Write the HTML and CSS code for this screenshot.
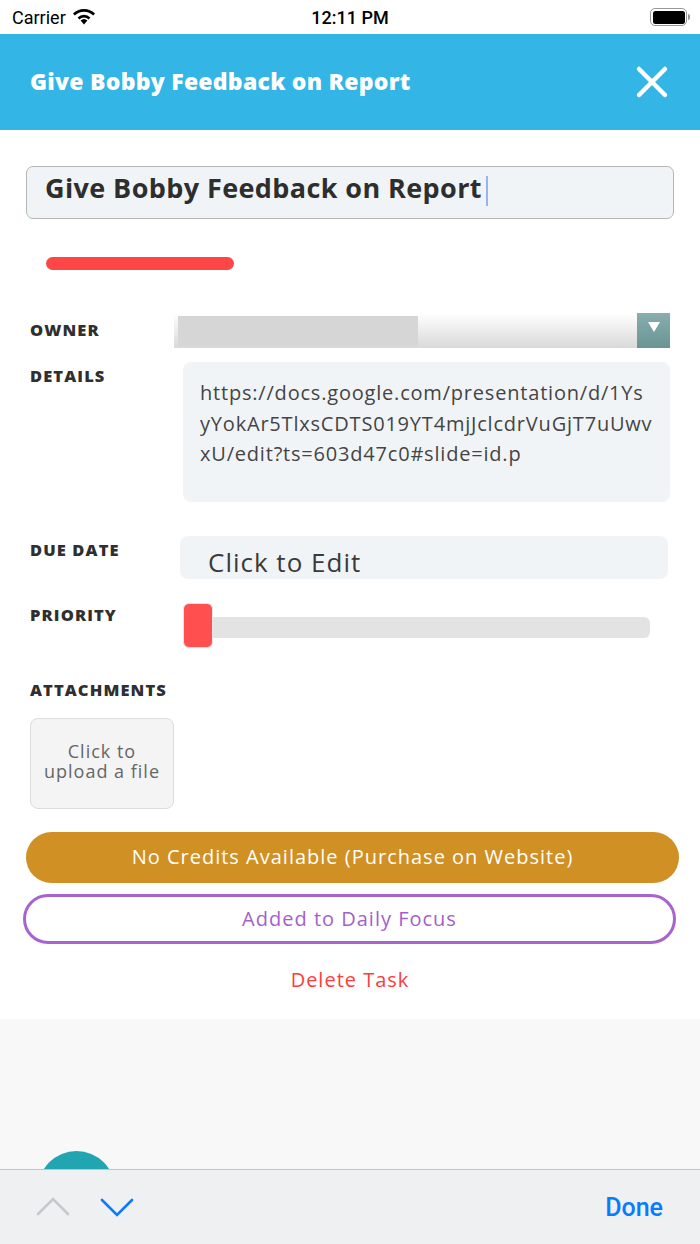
FILE: index.html
```html
<!DOCTYPE html>
<html>
<head>
<meta charset="utf-8">
<link rel="stylesheet" href="styles.css">
</head>
<body>
<div class="status">
  <div class="st-left">
    <span class="carrier">Carrier</span>
    <svg class="wifi" width="24" height="18" viewBox="0 0 24 18">
      <path d="M12 17.5 L8.6 13.6 A5 5 0 0 1 15.4 13.6 Z" fill="#000"/>
      <path d="M5.6 10.4 A9.3 9.3 0 0 1 18.4 10.4 L16.6 12.4 A6.6 6.6 0 0 0 7.4 12.4 Z" fill="#000"/>
      <path d="M1 6.6 A15.5 15.5 0 0 1 23 6.6 L21.2 8.6 A12.8 12.8 0 0 0 2.8 8.6 Z" fill="#000"/>
    </svg>
  </div>
  <div class="time">12:11 PM</div>
  <div class="battery"><div class="batt-body"><div class="batt-fill"></div></div><div class="batt-nub"></div></div>
</div>

<header class="header">
  <h1 class="header-title">Give Bobby Feedback on Report</h1>
  <svg class="close" width="34" height="34" viewBox="0 0 34 34">
    <path d="M4 4 L30 30 M30 4 L4 30" stroke="#fff" stroke-width="4.5" stroke-linecap="round"/>
  </svg>
</header>

<main class="content">
  <div class="title-input"><span class="title-text">Give Bobby Feedback on Report</span><span class="caret"></span></div>
  <div class="red-bar"></div>

  <div class="row row-owner">
    <div class="label">OWNER</div>
    <div class="select"><div class="select-value"></div><div class="select-btn"><span class="tri"></span></div></div>
  </div>

  <div class="row row-details">
    <div class="label">DETAILS</div>
    <div class="textarea">https://docs.google.com/presentation/d/1Ys<br>yYokAr5TlxsCDTS019YT4mjJclcdrVuGjT7uUwv<br>xU/edit?ts=603d47c0#slide=id.p</div>
  </div>

  <div class="row row-due">
    <div class="label">DUE DATE</div>
    <div class="due-box">Click to Edit</div>
  </div>

  <div class="row row-priority">
    <div class="label">PRIORITY</div>
    <div class="slider"><div class="track"></div><div class="thumb"></div></div>
  </div>

  <div class="label label-attach">ATTACHMENTS</div>
  <div class="upload">Click to<br>upload a file</div>

  <div class="btn btn-credits">No Credits Available (Purchase on Website)</div>
  <div class="btn btn-focus">Added to Daily Focus</div>
  <div class="delete">Delete Task</div>
</main>

<div class="filler"><div class="fab"></div></div>

<footer class="toolbar">
  <svg class="chev" width="34" height="22" viewBox="0 0 34 22">
    <path d="M2 19 L17 4 L32 19" stroke="#c7c7cc" stroke-width="2.6" fill="none" stroke-linecap="round"/>
  </svg>
  <svg class="chev chev-down" width="34" height="22" viewBox="0 0 34 22">
    <path d="M2 3 L17 18 L32 3" stroke="#0a7aff" stroke-width="2.6" fill="none" stroke-linecap="round"/>
  </svg>
  <div class="done">Done</div>
</footer>
</body>
</html>
```

FILE: styles.css
```css
* { box-sizing: border-box; }
html, body { margin: 0; padding: 0; }
body {
  width: 700px;
  height: 1244px;
  display: flex;
  flex-direction: column;
  font-family: "Open Sans", "Noto Sans", sans-serif;
  background: #f8f8f8;
  overflow: hidden;
}

/* status bar */
.status {
  height: 34px;
  background: #fff;
  display: flex;
  align-items: center;
  justify-content: space-between;
  padding: 0 10px 0 12px;
  font-family: Roboto, "Liberation Sans", sans-serif;
  position: relative;
}
.st-left { display: flex; align-items: center; gap: 6px; }
.carrier { font-size: 18px; color: #000; }
.wifi { margin-top: -2px; }
.time {
  position: absolute;
  left: 0; right: 0; top: 7px;
  text-align: center;
  font-size: 18px;
  font-weight: 500;
  color: #000;
  pointer-events: none;
}
.battery { display: flex; align-items: center; }
.batt-body {
  width: 37px; height: 18px;
  border: 1.5px solid #999;
  border-radius: 5px;
  padding: 1.5px;
}
.batt-fill { width: 100%; height: 100%; background: #000; border-radius: 2.5px; }
.batt-nub { width: 2px; height: 6px; background: #999; border-radius: 0 2px 2px 0; margin-left: 1px; }

/* header */
.header {
  height: 96px;
  background: #33b5e5;
  display: flex;
  align-items: center;
  justify-content: space-between;
  padding: 0 31px 0 30px;
}
.header-title {
  margin: 0 0 2px;
  color: #fff;
  font-size: 23px;
  font-weight: 800;
  letter-spacing: 0.25px;
}

/* content */
.content {
  background: #fff;
  padding: 36px 0 0;
  height: 889px;
}
.title-input {
  margin: 0 26px;
  height: 53px;
  background: #f1f4f7;
  border: 1.5px solid #b4b6b8;
  border-radius: 7px;
  display: flex;
  align-items: center;
  padding: 0 0 10px 18px;
}
.title-text {
  font-size: 27px;
  font-weight: 700;
  color: #2e2e2e;
  letter-spacing: 0.4px;
}
.caret {
  display: inline-block;
  width: 2px;
  height: 30px;
  background: #9bb2f2;
  margin: 6px 0 0 4px;
}
.red-bar {
  margin: 38px 0 0 46px;
  width: 188px;
  height: 13px;
  border-radius: 7px;
  background: #ff4646;
}

.row { display: flex; }
.label {
  font-size: 16.5px;
  font-weight: 800;
  color: #2f2f2f;
  letter-spacing: 1.1px;
}
.row-owner {
  margin-top: 43px;
  align-items: center;
  padding-left: 30px;
  height: 35px;
}
.row-owner .label { width: 144px; margin-top: -2px; }
.select {
  width: 496px;
  height: 35px;
  background: linear-gradient(#ffffff, #d9d9d9);
  display: flex;
  align-items: center;
  padding-left: 4px;
}
.select-value {
  width: 240px;
  height: 30px;
  background: #d6d6d6;
}
.select-btn {
  margin-left: auto;
  width: 33px;
  height: 35px;
  background: linear-gradient(#88aeae, #6a9494);
  display: flex;
  justify-content: center;
  padding-top: 9px;
}
.tri {
  width: 0; height: 0;
  border-left: 6px solid transparent;
  border-right: 6px solid transparent;
  border-top: 10px solid #fff;
}

.row-details {
  margin-top: 14px;
  padding-left: 30px;
}
.row-details .label { width: 153px; padding-top: 2px; }
.textarea {
  width: 487px;
  height: 140px;
  background: #f1f4f7;
  border-radius: 8px;
  padding: 16px 0 0 17px;
  font-size: 20px;
  line-height: 30.5px;
  letter-spacing: 0.8px;
  color: #444;
  white-space: nowrap;
  overflow: hidden;
}

.row-due {
  margin-top: 34px;
  padding-left: 30px;
}
.row-due .label { width: 150px; padding-top: 2px; }
.due-box {
  width: 488px;
  height: 43px;
  background: #f1f4f7;
  border-radius: 8px;
  padding: 10px 0 0 28px;
  font-size: 26px;
  line-height: 33px;
  letter-spacing: 1px;
  color: #3a3a3a;
  overflow: hidden;
}

.row-priority {
  margin-top: 24px;
  padding-left: 30px;
}
.row-priority .label { width: 153px; padding-top: 0; }
.slider {
  position: relative;
  width: 467px;
  height: 45px;
  display: flex;
  align-items: center;
}
.track {
  margin-top: 4px;
  width: 100%;
  height: 21px;
  background: #e3e3e3;
  border-radius: 6px;
}
.thumb {
  position: absolute;
  left: 0; top: 0;
  width: 30px;
  height: 45px;
  background: #ff4f4f;
  border: 1px solid #e6e6e6;
  border-radius: 6px;
}

.label-attach {
  margin: 30px 0 0 30px;
  line-height: 24px;
}
.upload {
  margin: 16px 0 0 30px;
  width: 144px;
  height: 91px;
  background: #f4f4f4;
  border: 1.5px solid #dcdcdc;
  border-radius: 8px;
  display: flex;
  align-items: center;
  justify-content: center;
  text-align: center;
  font-size: 18px;
  line-height: 19.5px;
  letter-spacing: 1px;
  color: #666;
  padding-bottom: 4px;
}

.btn {
  display: flex;
  align-items: center;
  justify-content: center;
  font-size: 20px;
  letter-spacing: 1px;
  border-radius: 26px;
}
.btn-credits {
  margin: 23px 21px 0 26px;
  height: 51px;
  background: #d09023;
  color: #fff;
  padding-bottom: 2px;
}
.btn-focus {
  margin: 11px 24px 0 23px;
  height: 50px;
  border: 3px solid #a764cf;
  background: #fff;
  color: #a35fcc;
  padding-bottom: 2px;
}
.delete {
  margin-top: 22px;
  text-align: center;
  font-size: 20px;
  letter-spacing: 1px;
  color: #ff3b3b;
}

/* filler */
.filler {
  flex: 1;
  background: #f8f8f8;
  position: relative;
  overflow: hidden;
}
.fab {
  position: absolute;
  left: 38px;
  bottom: -59px;
  width: 77px;
  height: 77px;
  border-radius: 50%;
  background: #20a5b1;
}

/* toolbar */
.toolbar {
  height: 75px;
  background: #eff0f2;
  border-top: 1px solid #c4c4c4;
  display: flex;
  align-items: center;
  padding: 0 37px 0 36px;
}
.chev { margin-top: -3px; }
.chev-down { margin-left: 30px; margin-top: 1px; }
.done {
  margin-left: auto;
  font-family: Roboto, "Liberation Sans", sans-serif;
  font-size: 25px;
  font-weight: 500;
  color: #0a7aff;
}
```
